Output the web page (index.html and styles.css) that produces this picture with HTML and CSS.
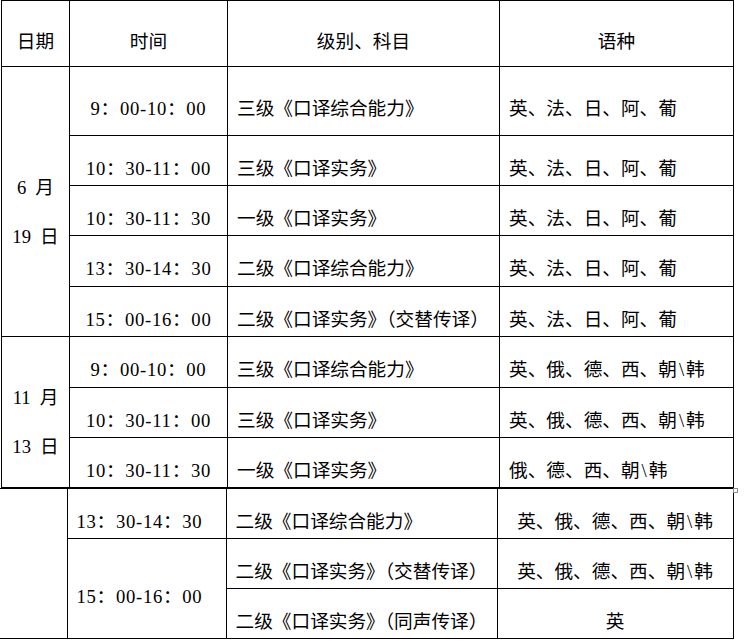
FILE: index.html
```html
<!DOCTYPE html>
<html lang="zh">
<head>
<meta charset="utf-8">
<title>口译考试时间表</title>
<link rel="stylesheet" href="styles.css">
</head>
<body>
<div class="page">
  <table class="t1">
    <colgroup><col class="w1"><col class="w2"><col class="w3"><col class="w4"></colgroup>
    <tr class="h-head">
      <td class="c">日期</td><td class="c">时间</td><td class="c">级别、科目</td><td class="c">语种</td>
    </tr>
    <tr class="h-first">
      <td class="c date" rowspan="5"><div>6<span class="sp">月</span></div><div>19<span class="sp">日</span></div></td>
      <td class="c tm">9：00-10：00</td><td class="l">三级《口译综合能力》</td><td class="l">英、法、日、阿、葡</td>
    </tr>
    <tr class="h50"><td class="c tm">10：30-11：00</td><td class="l">三级《口译实务》</td><td class="l">英、法、日、阿、葡</td></tr>
    <tr class="h50"><td class="c tm">10：30-11：30</td><td class="l">一级《口译实务》</td><td class="l">英、法、日、阿、葡</td></tr>
    <tr class="h51"><td class="c tm">13：30-14：30</td><td class="l">二级《口译综合能力》</td><td class="l">英、法、日、阿、葡</td></tr>
    <tr class="h50"><td class="c tm">15：00-16：00</td><td class="l">二级《口译实务》（交替传译）</td><td class="l">英、法、日、阿、葡</td></tr>
    <tr class="h51">
      <td class="c date" rowspan="3"><div>11<span class="sp">月</span></div><div>13<span class="sp">日</span></div></td>
      <td class="c tm">9：00-10：00</td><td class="l">三级《口译综合能力》</td><td class="l">英、俄、德、西、朝<span class="bs">\</span>韩</td>
    </tr>
    <tr class="h50"><td class="c tm">10：30-11：00</td><td class="l">三级《口译实务》</td><td class="l">英、俄、德、西、朝<span class="bs">\</span>韩</td></tr>
    <tr class="h50"><td class="c tm">10：30-11：30</td><td class="l">一级《口译实务》</td><td class="l">俄、德、西、朝<span class="bs">\</span>韩</td></tr>
  </table>
  <table class="t2">
    <colgroup><col class="v1"><col class="v2"><col class="v3"><col class="v4"></colgroup>
    <tr class="h50">
      <td class="blank" rowspan="3"></td>
      <td class="l tm">13：30-14：30</td><td class="l">二级《口译综合能力》</td><td class="c">英、俄、德、西、朝<span class="bs">\</span>韩</td>
    </tr>
    <tr class="h50">
      <td class="l tm" rowspan="2">15：00-16：00</td><td class="l">二级《口译实务》（交替传译）</td><td class="c">英、俄、德、西、朝<span class="bs">\</span>韩</td>
    </tr>
    <tr class="h50"><td class="l">二级《口译实务》（同声传译）</td><td class="c">英</td></tr>
  </table>
  <div class="handle"></div>
</div>
</body>
</html>
```
FILE: styles.css
```css
html, body {
  margin: 0;
  background: #fff;
}
body {
  font-family: "Liberation Serif", "Noto Sans CJK SC", serif;
  font-size: 18.67px;
  color: #000;
}
.page {
  position: relative;
  width: 745px;
  height: 643px;
}
table {
  border-collapse: collapse;
  table-layout: fixed;
}
td {
  border: 1px solid #000;
  padding: 16px 0 0 0;
  vertical-align: middle;
  line-height: 20px;
  white-space: nowrap;
  overflow: hidden;
}
.t1 {
  margin-left: 1px;
  width: 733px;
}
.w1 { width: 68px; }
.w2 { width: 158px; }
.w3 { width: 272px; }
.w4 { width: 234px; }
.t2 {
  width: 733px;
}
.v1 { width: 67px; }
.v2 { width: 159px; }
.v3 { width: 271px; }
.v4 { width: 236px; }
.h-head { height: 66px; }
.h-first { height: 69px; }
.h50 { height: 50px; }
.h51 { height: 51px; }
.c { text-align: center; }
.l { padding-left: 9px; }
.tm { letter-spacing: 0.7px; }
.date {
  line-height: 49px;
  padding-top: 20px;
}
.sp {
  margin-left: 9px;
}
.bs {
  margin: 0 2px;
}
.t2 td.blank {
  border-left: none;
  border-top: 1px solid #000;
}
.handle {
  position: absolute;
  left: 733px;
  top: 488px;
  width: 3px;
  height: 3px;
  border: 1px solid #8a8a8a;
  background: #fff;
}
```
